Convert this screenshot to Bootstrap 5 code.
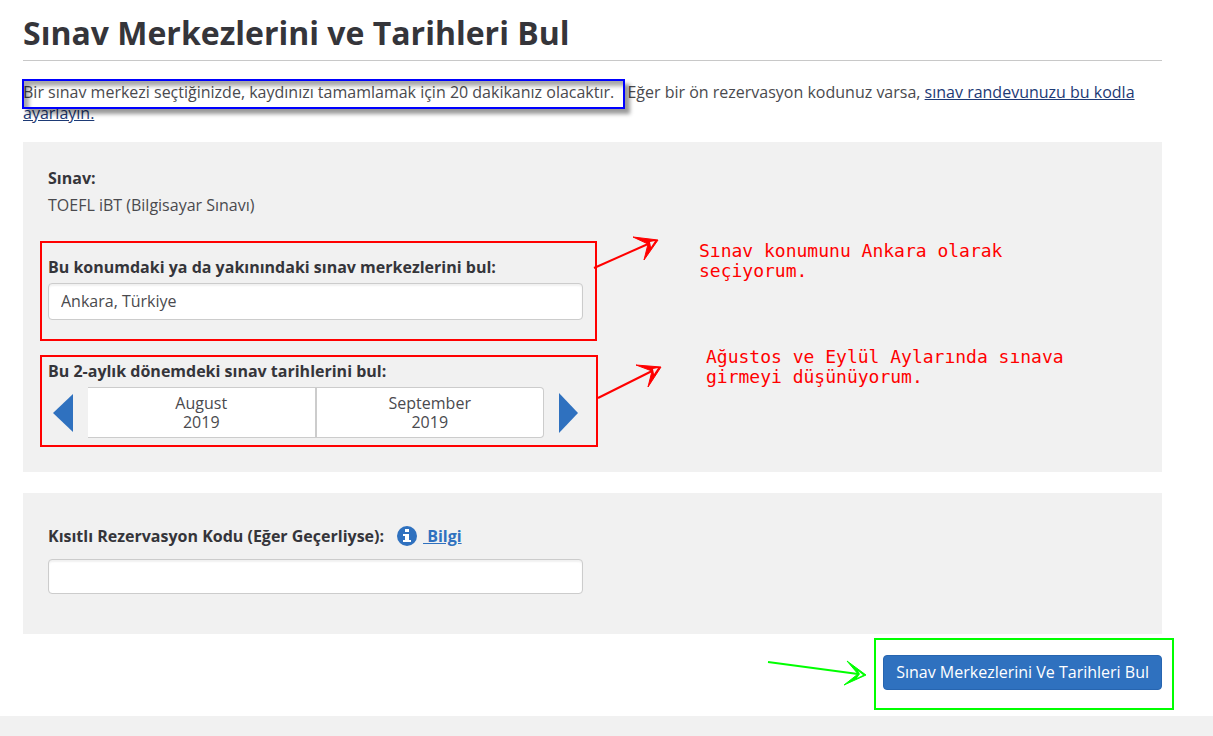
<!DOCTYPE html>
<html lang="tr">
<head>
<meta charset="utf-8">
<meta name="viewport" content="width=device-width, initial-scale=1">
<title>Sınav Merkezlerini ve Tarihleri Bul</title>
<link href="https://cdn.jsdelivr.net/npm/bootstrap@5.3.0/dist/css/bootstrap.min.css" rel="stylesheet">
<style>
  body { font-family: "Open Sans", "Noto Sans", sans-serif; font-size: 16px; line-height: 20px; color: #4a4a4e; background: #fff; }
  main { padding: 11px 51px 6px 23px; }
  h1 { font-size: 32px; line-height: 44px; font-weight: 700; color: #35353a; border-bottom: 1px solid #c8c8c8; padding-bottom: 5px; margin-bottom: 21px; }
  .intro { line-height: 21px; margin-bottom: 18px; padding-right: 11px; }
  .intro a { color: #1d3a75; }
  .marked { position: relative; margin-right: 9px; }
  .marked::after { content: ""; position: absolute; inset: -2px -11px -6px -1px; border: 2px solid #00f; box-shadow: 5px 5px 4px rgba(0,0,0,.4), inset 5px 5px 4px rgba(0,0,0,.35); }
  .panel { background: #f1f1f1; padding: 26px 17px 25px; margin-bottom: 21px; }
  .panel-code { padding: 32px 17px 40px; margin-bottom: 4px; }
  .inset { padding-left: 8px; }
  .exam { margin-bottom: 25px; line-height: 22px; }
  .field-label { display: block; font-weight: 700; line-height: 20px; color: #35353a; }
  .gap-below { margin-bottom: 6px; }
  .frame { border: 2px solid red; flex: 0 1 557px; padding: 14px 12px 19px 6px; }
  .frame-dates { flex-basis: 558px; padding: 4px 12px 7px 6px; margin-top: 14px; }
  .form-control { font-size: 16px; line-height: 21px; color: #4a4a4e; border: 1px solid #ccc; border-radius: 4px; padding: 7px 12px; box-shadow: inset 0 2px 2px rgba(0,0,0,.06); }
  .code-row { margin-bottom: 12px; }
  .code-box { max-width: 535px; padding: 6px 12px; }
  .note { font-family: "DejaVu Sans Mono", monospace; font-size: 18px; line-height: 20px; color: red; flex: 0 1 380px; }
  .note-dates { margin-top: 6px; }
  .arrow { flex: none; overflow: visible; }
  .arrow-dates { margin-top: 14px; }
  .months { flex: 1; background: #fff; border: 1px solid #ccc; border-left: 0; border-radius: 0 4px 4px 0; line-height: 19px; text-align: center; }
  .months > div { flex: 1; padding: 6px 0 5px; }
  .months > div + div { border-left: 2px solid #ccc; }
  .step-btn { border: 0; background: none; padding: 0; width: 40px; display: flex; align-items: center; justify-content: center; }
  .info-icon { margin: 0 5px 0 12px; }
  .info-link { color: #2f71bf; font-weight: 700; }
  .submit-frame { border: 2px solid #0f0; padding: 15px 10px 18px 7px; margin-right: -12px; }
  .btn-find { --bs-btn-bg: #2f71bf; --bs-btn-border-color: #2765b0; --bs-btn-color: #fff; --bs-btn-hover-bg: #2765b0; --bs-btn-hover-color: #fff; font-size: 16px; line-height: 21px; padding: 6px 12px; border-radius: 4px; }
  footer { background: #f1f1f1; height: 20px; }
</style>
</head>
<body>
<main>
  <h1>Sınav Merkezlerini ve Tarihleri Bul</h1>
  <p class="intro"><span class="marked">Bir sınav merkezi seçtiğinizde, kaydınızı tamamlamak için 20 dakikanız olacaktır.</span> Eğer bir ön rezervasyon kodunuz varsa, <a href="#kod">sınav randevunuzu bu kodla ayarlayın.</a></p>

  <form>
    <section class="panel">
      <div class="inset exam">
        <strong class="field-label gap-below">Sınav:</strong>
        <div>TOEFL iBT (Bilgisayar Sınavı)</div>
      </div>

      <div class="d-flex align-items-start">
        <div class="frame">
          <label class="field-label gap-below" for="konum">Bu konumdaki ya da yakınındaki sınav merkezlerini bul:</label>
          <input class="form-control" id="konum" type="text" value="Ankara, Türkiye">
        </div>
        <svg class="arrow" width="102" height="40" fill="none" stroke="red" stroke-width="2" aria-hidden="true">
          <path d="M-3 27 51 3"/><path d="M36-4 61-1 47 19 51 3Z" stroke-width="1" fill="red"/><path d="M53 1 58 0 54 6Z" fill="#f1f1f1" stroke="none"/>
        </svg>
        <div class="note">Sınav konumunu Ankara olarak seçiyorum.</div>
      </div>

      <div class="d-flex align-items-start">
        <div class="frame frame-dates" role="group" aria-labelledby="donem">
          <span class="field-label gap-below" id="donem">Bu 2-aylık dönemdeki sınav tarihlerini bul:</span>
          <div class="d-flex">
            <button class="step-btn" type="button" aria-label="Önceki aylar"><svg width="30" height="40"><path d="M0 20 20 1V39Z" fill="#2f71bf"/></svg></button>
            <div class="months d-flex">
              <div>August<br>2019</div>
              <div>September<br>2019</div>
            </div>
            <button class="step-btn" type="button" aria-label="Sonraki aylar"><svg width="30" height="40"><path d="M10 0 29 20 10 40Z" fill="#2f71bf"/></svg></button>
          </div>
        </div>
        <svg class="arrow arrow-dates" width="108" height="60" fill="none" stroke="red" stroke-width="2" aria-hidden="true">
          <path d="M0 43 54 16"/><path d="M38 10 63 12 50 32 54 16Z" stroke-width="1" fill="red"/><path d="M55 14 60 13 56 19Z" fill="#f1f1f1" stroke="none"/>
        </svg>
        <div class="note note-dates">Ağustos ve Eylül Aylarında sınava girmeyi düşünüyorum.</div>
      </div>
    </section>

    <section class="panel panel-code">
      <div class="inset">
        <div class="d-flex align-items-center code-row">
          <label class="field-label" for="kod">Kısıtlı Rezervasyon Kodu (Eğer Geçerliyse):</label>
          <svg class="info-icon" width="22" height="22" viewBox="0 0 22 22" aria-hidden="true"><circle cx="11" cy="11" r="10" fill="#2f71bf"/><path d="M9 4h4v3H9zM7 9h6v6h2v2H7v-2h2v-4H7z" fill="#fff"/></svg>
          <a class="info-link" href="#bilgi">&nbsp;Bilgi</a>
        </div>
        <input class="form-control code-box" id="kod" type="text">
      </div>
    </section>

    <div class="d-flex justify-content-end">
      <svg class="arrow" width="106" height="60" fill="none" stroke="#0f0" stroke-width="2" aria-hidden="true">
        <path d="M0 24 90 36"/><path d="M79 23 98 37 76 47 90 36Z" stroke-width="1" fill="#0f0"/><path d="M90 33 95 37 89 40 92 36Z" fill="#fff" stroke="none"/>
      </svg>
      <div class="submit-frame"><button class="btn btn-find" type="submit">Sınav Merkezlerini Ve Tarihleri Bul</button></div>
    </div>
  </form>
</main>
<footer></footer>
<script src="https://cdn.jsdelivr.net/npm/bootstrap@5.3.0/dist/js/bootstrap.bundle.min.js"></script>
</body>
</html>
